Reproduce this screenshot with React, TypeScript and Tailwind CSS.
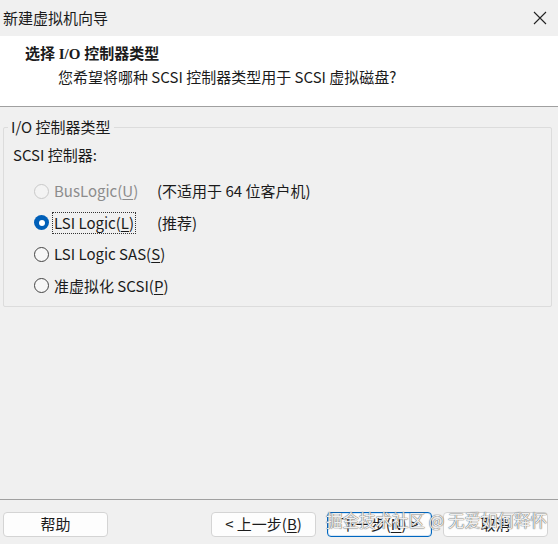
import React, { useState } from 'react';

const FONT = '[font-family:"Noto_Sans_CJK_SC","Microsoft_YaHei",sans-serif]';

type Opt = { id: string; label: string; key: string; note?: string; disabled?: boolean };

const OPTIONS: Opt[] = [
  { id: 'bus', label: 'BusLogic(', key: 'U', note: '(不适用于 64 位客户机)', disabled: true },
  { id: 'lsi', label: 'LSI Logic(', key: 'L', note: '(推荐)' },
  { id: 'sas', label: 'LSI Logic SAS(', key: 'S' },
  { id: 'pv', label: '准虚拟化 SCSI(', key: 'P' },
];

const Radio: React.FC<{ checked: boolean; disabled?: boolean }> = ({ checked, disabled }) => {
  if (checked) {
    return (
      <span className="flex h-[15px] w-[15px] shrink-0 items-center justify-center rounded-full bg-[#005fb8]">
        <span className="h-[6px] w-[6px] rounded-full bg-white" />
      </span>
    );
  }
  return (
    <span
      className={`h-[15px] w-[15px] shrink-0 rounded-full border ${disabled ? 'border-[#c8c8c8] bg-[#f3f3f3]' : 'border-[#444] bg-[#f7f7f7]'}`}
    />
  );
};

const Button: React.FC<{ children: React.ReactNode; primary?: boolean }> = ({ children, primary }) => (
  <button
    className={`flex h-[25px] w-[105px] items-center justify-center whitespace-nowrap rounded-[4px] bg-[#fdfdfd] text-[15px] text-[#1b1b1b] ${primary ? 'border border-[#0067c0] shadow-[inset_0_0_0_1px_#d6e6f5]' : 'border border-[#d4d4d4]'}`}
  >
    {children}
  </button>
);

export default function App() {
  const [sel, setSel] = useState('lsi');

  return (
    <div className={`relative flex h-[544px] w-[558px] flex-col overflow-hidden bg-[#f0f0f0] text-[#1b1b1b] ${FONT}`}>
      {/* title bar */}
      <div className="flex h-[36px] items-center justify-between bg-[#f0f0f0] pl-[3px] pr-[11px]">
        <span className="text-[15px]">新建虚拟机向导</span>
        <svg width="14" height="14" viewBox="0 0 14 14" className="text-[#222]">
          <path d="M1 1L13 13M13 1L1 13" stroke="currentColor" strokeWidth="1.1" />
        </svg>
      </div>

      {/* header */}
      <div className="h-[71px] border-b border-[#a0a0a0] bg-white pt-[8px]">
        <div className="pl-[25px] text-[15px] font-bold leading-[20px] [font-family:'Liberation_Serif','Noto_Sans_CJK_SC',serif]">
          选择 I/O 控制器类型
        </div>
        <div className="pl-[58px] pt-[3px] text-[15px] leading-[20px]">
          您希望将哪种 SCSI 控制器类型用于 SCSI 虚拟磁盘?
        </div>
      </div>

      {/* body */}
      <div className="flex-1 px-[3px] pt-[20px]">
        <div className="relative h-[180px] w-[549px] rounded-[2px] border border-[#dcdcdc]">
          <span className="absolute left-[4px] top-[-11px] bg-[#f0f0f0] px-[3px] text-[15px] leading-[20px]">
            I/O 控制器类型
          </span>
          <div className="pl-[9px] pt-[17px] text-[15px] leading-[20px]">SCSI 控制器:</div>
          <div className="flex flex-col gap-[11.5px] pt-[16px]">
            {OPTIONS.map(o => (
              <div key={o.id} className="flex h-[20px] items-center whitespace-nowrap text-[15px] leading-[20px]">
                <div
                  className={`flex items-center pl-[30px] ${o.note ? 'w-[153px] shrink-0' : ''}`}
                  onClick={() => !o.disabled && setSel(o.id)}
                >
                  <Radio checked={sel === o.id} disabled={o.disabled} />
                  <span
                    className={`ml-[4px] px-[1px] ${o.disabled ? 'text-[#8c8c8c]' : ''} ${sel === o.id ? 'outline-1 outline-dotted outline-[#333]' : ''}`}
                  >
                    {o.label}
                    <span className="underline underline-offset-2">{o.key}</span>)
                  </span>
                </div>
                {o.note && <span>{o.note}</span>}
              </div>
            ))}
          </div>
        </div>
      </div>

      {/* footer */}
      <div className="flex h-[45px] items-start border-t border-[#a0a0a0] pl-[3px] pr-[10px] pt-[12px]">
        <Button>帮助</Button>
        <div className="ml-auto flex gap-[11px]">
          <Button>
            &lt; 上一步(<span className="underline underline-offset-2">B</span>)
          </Button>
          <Button primary>
            下一步(<span className="underline underline-offset-2">N</span>) &gt;
          </Button>
          <Button>取消</Button>
        </div>
      </div>

      {/* watermark */}
      <div className="pointer-events-none absolute left-[326px] top-[509px] whitespace-nowrap text-[16.5px] leading-[22px] text-white/90 [text-shadow:0_0_1px_#555,0_0_1px_#555]">
        掘金技术社区 @ 无爱如何释怀
      </div>
    </div>
  );
}
